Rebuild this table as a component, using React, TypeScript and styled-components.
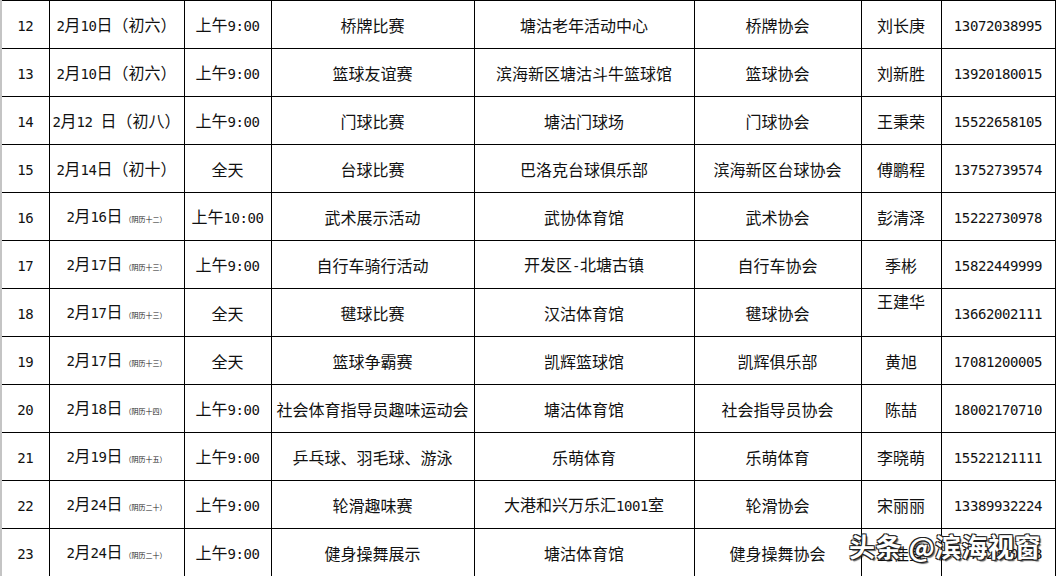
import React from "react";
import styled, { createGlobalStyle } from "styled-components";

const GlobalStyle = createGlobalStyle`
  html, body {
    margin: 0;
    padding: 0;
    background: #fff;
    overflow: hidden;
  }
  body {
    font-family: "Noto Sans CJK SC", "Noto Sans", sans-serif;
    color: #111;
  }
`;

const Page = styled.div`
  position: relative;
  width: 1063px;
  height: 576px;
  overflow: hidden;
  background: #fff;
`;

const Table = styled.table`
  border-collapse: collapse;
  table-layout: fixed;
  width: 1054px;
  border-left: 2px solid #c4c4c4;
  border-right: 1px solid #9a9a9a;
`;

const Row = styled.tr`
  height: 48px;
`;

const Cell = styled.td<{ $top?: boolean }>`
  border: 1px solid #000;
  padding: 0;
  text-align: center;
  vertical-align: ${(p) => (p.$top ? "top" : "middle")};
  padding-top: ${(p) => (p.$top ? "1px" : "0")};
  font-size: 16px;
  line-height: 22px;
  white-space: nowrap;
  overflow: hidden;
  font-weight: 400;
`;

const Latin = styled.span`
  font-family: "DejaVu Sans Mono", "Liberation Mono", monospace;
  font-size: 14px;
  letter-spacing: -0.4px;
`;

const Lunar = styled.span`
  font-size: 7px;
  letter-spacing: 0;
  margin-left: 2px;
  color: #222;
`;

const Watermark = styled.div`
  position: absolute;
  left: 849px;
  top: 527px;
  font-family: "Noto Sans CJK SC", sans-serif;
  font-size: 26px;
  font-weight: 700;
  color: #fff;
  letter-spacing: 0.5px;
  text-shadow:
    1px 1px 0 #222, -1px -1px 0 #222, 1px -1px 0 #222, -1px 1px 0 #222,
    2px 2px 1px rgba(0, 0, 0, 0.6);
  white-space: nowrap;
`;

const widths = [48, 135, 87, 203, 220, 167, 80, 114];

type Item = {
  no: string;
  date: string;
  lunar?: string;
  time: string;
  event: string;
  place: string;
  org: string;
  person: string;
  phone: string;
  personTop?: boolean;
};

const rows: Item[] = [
  { no: "12", date: "2月10日（初六）", time: "上午9:00", event: "桥牌比赛", place: "塘沽老年活动中心", org: "桥牌协会", person: "刘长庚", phone: "13072038995" },
  { no: "13", date: "2月10日（初六）", time: "上午9:00", event: "篮球友谊赛", place: "滨海新区塘沽斗牛篮球馆", org: "篮球协会", person: "刘新胜", phone: "13920180015" },
  { no: "14", date: "2月12 日（初八）", time: "上午9:00", event: "门球比赛", place: "塘沽门球场", org: "门球协会", person: "王秉荣", phone: "15522658105" },
  { no: "15", date: "2月14日（初十）", time: "全天", event: "台球比赛", place: "巴洛克台球俱乐部", org: "滨海新区台球协会", person: "傅鹏程", phone: "13752739574" },
  { no: "16", date: "2月16日", lunar: "（阴历十二）", time: "上午10:00", event: "武术展示活动", place: "武协体育馆", org: "武术协会", person: "彭清泽", phone: "15222730978" },
  { no: "17", date: "2月17日", lunar: "（阴历十三）", time: "上午9:00", event: "自行车骑行活动", place: "开发区-北塘古镇", org: "自行车协会", person: "季彬", phone: "15822449999" },
  { no: "18", date: "2月17日", lunar: "（阴历十三）", time: "全天", event: "毽球比赛", place: "汉沽体育馆", org: "毽球协会", person: "王建华", phone: "13662002111", personTop: true },
  { no: "19", date: "2月17日", lunar: "（阴历十三）", time: "全天", event: "篮球争霸赛", place: "凯辉篮球馆", org: "凯辉俱乐部", person: "黄旭", phone: "17081200005" },
  { no: "20", date: "2月18日", lunar: "（阴历十四）", time: "上午9:00", event: "社会体育指导员趣味运动会", place: "塘沽体育馆", org: "社会指导员协会", person: "陈喆", phone: "18002170710" },
  { no: "21", date: "2月19日", lunar: "（阴历十五）", time: "上午9:00", event: "乒乓球、羽毛球、游泳", place: "乐萌体育", org: "乐萌体育", person: "李晓萌", phone: "15522121111" },
  { no: "22", date: "2月24日", lunar: "（阴历二十）", time: "上午9:00", event: "轮滑趣味赛", place: "大港和兴万乐汇1001室", org: "轮滑协会", person: "宋丽丽", phone: "13389932224" },
  { no: "23", date: "2月24日", lunar: "（阴历二十）", time: "上午9:00", event: "健身操舞展示", place: "塘沽体育馆", org: "健身操舞协会", person: "王佳宜", phone: "13702080088" },
];

// wrap runs of ascii (digits, colon, dash) in the monospace face
const Mixed: React.FC<{ text: string }> = ({ text }) => {
  const parts = text.match(/[\x20-\x7e]+|[^\x20-\x7e]+/g) || [];
  return (
    <>
      {parts.map((p, i) =>
        /^[\x20-\x7e]+$/.test(p) ? <Latin key={i}>{p}</Latin> : <span key={i}>{p}</span>
      )}
    </>
  );
};

export default function App() {
  return (
    <Page>
      <GlobalStyle />
      <Table>
        <colgroup>
          {widths.map((w, i) => (
            <col key={i} style={{ width: w }} />
          ))}
        </colgroup>
        <tbody>
          {rows.map((r) => (
            <Row key={r.no}>
              <Cell><Mixed text={r.no} /></Cell>
              <Cell>
                <Mixed text={r.date} />
                {r.lunar && <Lunar>{r.lunar}</Lunar>}
              </Cell>
              <Cell><Mixed text={r.time} /></Cell>
              <Cell><Mixed text={r.event} /></Cell>
              <Cell><Mixed text={r.place} /></Cell>
              <Cell><Mixed text={r.org} /></Cell>
              <Cell $top={r.personTop}><Mixed text={r.person} /></Cell>
              <Cell><Mixed text={r.phone} /></Cell>
            </Row>
          ))}
        </tbody>
      </Table>
      <Watermark>头条 @滨海视窗</Watermark>
    </Page>
  );
}
